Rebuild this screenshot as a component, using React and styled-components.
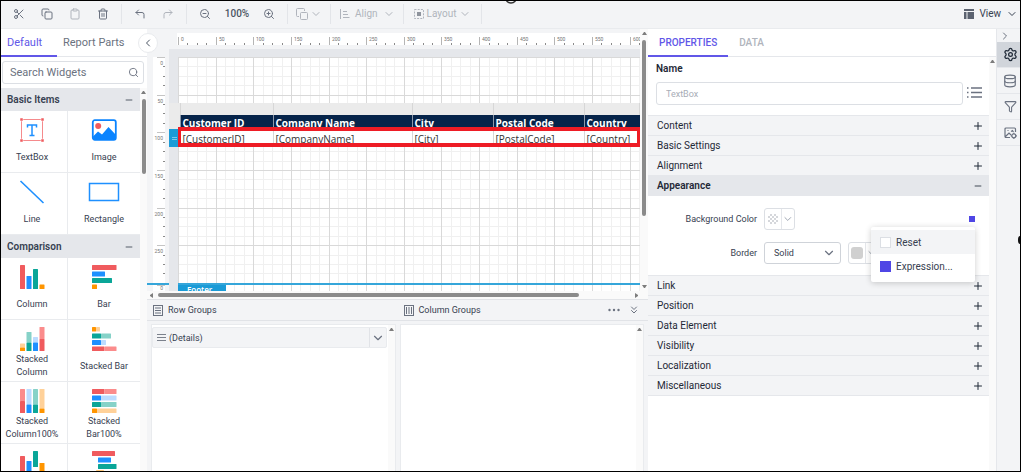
import React from 'react';
import styled, { createGlobalStyle, css } from 'styled-components';
import {
  ChevronDown,
  ChevronLeft,
  ChevronRight,
  ChevronsDown,
  Clipboard,
  Copy,
  CornerUpLeft,
  CornerUpRight,
  Database,
  Filter,
  Minus,
  Plus,
  Scissors,
  Search,
  Settings,
  Trash2,
  ZoomIn,
  ZoomOut,
} from 'lucide-react';

const GlobalStyle = createGlobalStyle`
  * { box-sizing: border-box; }
  body {
    margin: 0;
    font-family: Roboto, 'Liberation Sans', sans-serif;
    font-size: 10px;
    color: #374151;
  }
  button, input, select { font: inherit; color: inherit; }
  button { padding: 0; border: 0; background: none; }
`;

// --- Shell ---

const Shell = styled.div`
  position: relative;
  display: flex;
  flex-direction: column;
  height: 100vh;
  border: 1px solid #000;
  background: #f3f4f6;
  overflow: hidden;
`;

const Workspace = styled.div`
  flex: 1;
  min-height: 0;
  display: grid;
  grid-template-columns: 146px minmax(0, 1fr) 349px 23px;
`;

const TopMark = styled.svg`
  position: absolute;
  top: 0;
  left: 50%;
  margin-left: -5px;
`;

const EdgeMark = styled.svg`
  position: absolute;
  top: 50%;
  right: 0;
`;

// --- Toolbar ---

const Toolbar = styled.header`
  flex: none;
  display: flex;
  align-items: center;
  height: 28px;
  padding-bottom: 2px;
  border-bottom: 1px solid #e9ebee;
  color: #6b7280;
`;

const ToolGroup = styled.div`
  display: flex;
  align-items: center;
  height: 20px;
  padding: 0 ${(p) => (p.$last ? 2 : 4)}px;
  border-right: ${(p) => (p.$last ? 'none' : '1px solid #e3e5e9')};
  margin-left: ${(p) => (p.$last ? 'auto' : '0')};
`;

const ToolButton = styled.button`
  display: flex;
  align-items: center;
  justify-content: center;
  gap: ${(p) => p.$gap || 4}px;
  min-width: 28px;
  height: 20px;
  padding: 0 ${(p) => p.$pad || 0}px;
  font-size: 10px;
  color: ${(p) => (p.$muted ? '#b0b4bc' : p.$strong ? '#374151' : '#6b7280')};
`;

const ZoomLevel = styled.span`
  width: 36px;
  text-align: center;
  font-weight: 500;
  color: #4b5563;
`;

// --- Widget palette ---

const Palette = styled.aside`
  position: relative;
  display: flex;
  flex-direction: column;
  min-height: 0;
  background: #fff;
`;

const Tabs = styled.div`
  flex: none;
  display: flex;
  height: 28px;
  border-bottom: 1px solid #e5e7eb;
`;

const Tab = styled.button`
  height: 28px;
  min-width: 56px;
  padding: 0 ${(p) => (p.$narrow ? 6 : 11)}px;
  font-size: ${(p) => (p.$narrow ? 11 : 10)}px;
  font-weight: ${(p) => (p.$narrow ? 400 : 500)};
  text-align: left;
  white-space: nowrap;
  color: ${(p) => (p.$active ? '#6157e8' : p.$muted ? '#b0b4bc' : '#6b7280')};
  border-bottom: 2px solid ${(p) => (p.$active ? '#6157e8' : 'transparent')};
`;

const CollapseButton = styled.button`
  position: absolute;
  top: 4px;
  right: -11px;
  z-index: 2;
  display: flex;
  align-items: center;
  justify-content: center;
  width: 20px;
  height: 20px;
  border-radius: 50%;
  background: #fff;
  border: 1px solid #e9ebee;
  color: #4b5563;
`;

const SearchBox = styled.label`
  flex: none;
  display: flex;
  align-items: center;
  height: 23px;
  margin: 4px 3px 4px 1px;
  padding: 0 4px 0 7px;
  border: 1px solid #dcdfe4;
  border-radius: 3px;
  color: #6b7280;
`;

const SearchInput = styled.input`
  flex: 1;
  min-width: 0;
  padding: 0;
  border: 0;
  outline: 0;
  font-size: 11px;
  &::placeholder { color: #6b7280; opacity: 1; }
`;

const PaletteBody = styled.div`
  flex: 1;
  min-height: 0;
  display: flex;
`;

const PaletteList = styled.div`
  flex: 1;
  min-width: 0;
  overflow: hidden;
`;

const GroupHeader = styled.button`
  display: flex;
  align-items: center;
  justify-content: space-between;
  width: 100%;
  height: 23px;
  padding: 0 6px;
  background: #e5e7eb;
  font-weight: 600;
  color: #374151;
`;

const WidgetGrid = styled.div`
  display: grid;
  grid-template-columns: 67fr 72fr;
`;

const Widget = styled.button`
  display: flex;
  flex-direction: column;
  align-items: center;
  height: 62px;
  padding: 7px 4px 0 0;
  border-bottom: 1px solid #e9ebee;
  border-right: 1px solid #e9ebee;
  &:nth-child(2n) {
    padding-right: 0;
    border-right: 0;
  }
`;

const WidgetLabel = styled.span`
  display: flex;
  align-items: center;
  height: 26px;
  margin-top: 2px;
  padding: 0 3px;
  font-size: 9px;
  line-height: 13px;
  text-align: center;
`;

// --- Scroll bars ---

const VerticalBar = styled.div`
  flex: none;
  display: flex;
  flex-direction: column;
  align-items: center;
  gap: 4px;
  width: ${(p) => (p.$wide ? 8 : 7)}px;
  padding: 2px 0;
  background: #fafafa;
`;

const HorizontalBar = styled.div`
  flex: none;
  display: flex;
  align-items: center;
  gap: 4px;
  height: 8px;
  padding: 0 9px 0 2px;
  background: #fafafa;
`;

const Thumb = styled.div`
  border-radius: 3px;
  background: #8b8b8b;
`;

const VThumb = styled(Thumb)`
  width: 4px;
  height: ${(p) => p.$size};
  margin-bottom: auto;
`;

const HThumb = styled(Thumb)`
  height: 4px;
  width: ${(p) => p.$size};
  margin-right: auto;
`;

// --- Designer ---

const Designer = styled.main`
  display: flex;
  flex-direction: column;
  min-width: 0;
  min-height: 0;
`;

const DesignArea = styled.div`
  flex: 0 0 262px;
  display: flex;
  min-height: 0;
`;

const DesignColumn = styled.div`
  flex: 1;
  min-width: 0;
  display: flex;
  flex-direction: column;
`;

const TopRuler = styled.svg`
  display: block;
  flex: none;
  align-self: flex-end;
  width: calc(100% - 30px);
  height: 12px;
  margin: 4px 0;
  background: #fff;
`;

const Stage = styled.div`
  flex: 1;
  min-height: 0;
  display: flex;
`;

const RulerColumn = styled.div`
  flex: none;
  display: flex;
  flex-direction: column;
  width: 22px;
  padding-top: 8px;
`;

const SideRuler = styled.svg`
  display: block;
  width: 12px;
  margin-left: 6px;
  background: #fff;
  ${(p) =>
    p.$short
      ? css`
          height: 6px;
        `
      : css`
          flex: 1;
          min-height: 0;
        `}
`;

const RulerDivider = styled.div`
  height: 2px;
  background: #35a6da;
`;

const Desk = styled.div`
  flex: 1;
  min-width: 0;
  display: flex;
  padding: 8px 0 0 9px;
  background: #e5e7eb;
`;

const Page = styled.div`
  position: relative;
  flex: 1;
  min-width: 0;
  display: flex;
  flex-direction: column;
  padding-top: 46px;
  background: #fff;
`;

const PageGrid = styled.svg`
  position: absolute;
  top: 0;
  left: 0;
  width: 100%;
  height: 100%;
`;

const TablixFrame = styled.div`
  position: relative;
  margin-left: -9px;
`;

const Tablix = styled.table`
  width: 100%;
  table-layout: fixed;
  border-collapse: collapse;
  font-family: 'Open Sans', 'Noto Sans', sans-serif;
  font-size: 10px;
  line-height: 14px;
  color: #333;
  td, th {
    padding: 0 0 0 2px;
    text-align: left;
    vertical-align: top;
    white-space: nowrap;
    overflow: hidden;
  }
`;

const HandleRow = styled.tr`
  height: 12px;
  background: #ebebeb;
  td { border-right: 1px solid #d7d7d7; }
`;

const HeaderRow = styled.tr`
  height: 14px;
  th {
    padding-top: 3px;
    line-height: 11px;
    background: #06244a;
    color: #fff;
    font-weight: 700;
    border-left: 1px solid #8d99aa;
  }
  td { background: #ebebeb; }
`;

const DataRow = styled.tr`
  height: 18px;
  background: #fff;
  td { padding-top: 3px; border-left: 1px solid #d7d7d7; }
  td:first-child {
    padding: 7px 0 0 3px;
    border: 0;
    background: #1a9bd7;
  }
`;

const RowHighlight = styled.div`
  position: absolute;
  right: 0;
  bottom: 0;
  left: 9px;
  height: 20px;
  border: solid #ee1c25;
  border-width: 4px 3px;
`;

const FooterBand = styled.div`
  position: relative;
  height: 8px;
  margin-top: auto;
  border-top: 2px solid #35a6da;
`;

const FooterTag = styled.div`
  width: 48px;
  height: 6px;
  padding-left: 9px;
  overflow: hidden;
  background: #1a9bd7;
  color: #fff;
  font-family: 'Open Sans', 'Noto Sans', sans-serif;
  font-size: 8px;
  font-weight: 600;
  line-height: 10px;
`;

// --- Row and column groups ---

const GroupsBar = styled.div`
  flex: none;
  display: grid;
  grid-template-columns: 1fr 1fr;
  height: 22px;
  border-top: 1px solid #e1e3e7;
  border-bottom: 1px solid #e1e3e7;
`;

const GroupsTitle = styled.div`
  display: flex;
  align-items: center;
  gap: 5px;
  padding: 0 8px 0 6px;
  font-size: 9px;
`;

const GroupsActions = styled.div`
  display: flex;
  align-items: center;
  gap: 8px;
  margin-left: auto;
  color: #6b7280;
  button { display: flex; }
`;

const GroupsBody = styled.div`
  flex: 1;
  min-height: 0;
  display: grid;
  grid-template-columns: 1fr 1fr;
  gap: 4px;
  padding: 3px 4px 0;
`;

const GroupsPane = styled.section`
  display: flex;
  border: 1px solid #e9ebee;
  border-bottom: 0;
  background: #fff;
`;

const PaneContent = styled.div`
  flex: 1;
  min-width: 0;
  padding: 2px 1px 0 0;
`;

const GroupItem = styled.div`
  display: flex;
  align-items: center;
  gap: 3px;
  height: 21px;
  padding-left: 4px;
  border: 1px solid #e9ebee;
  border-radius: 2px;
  background: #f3f4f6;
  font-size: 9px;
`;

const GroupToggle = styled.button`
  display: flex;
  align-items: center;
  justify-content: center;
  width: 17px;
  height: 19px;
  margin-left: auto;
  border-left: 1px solid #e1e3e7;
  color: #6b7280;
`;

// --- Properties ---

const Properties = styled.aside`
  display: flex;
  flex-direction: column;
  min-height: 0;
  background: #fff;
  border-right: 1px solid #e5e7eb;
`;

const PropertiesBody = styled.div`
  flex: 1;
  min-height: 0;
  display: flex;
`;

const PropertyList = styled.div`
  flex: 1;
  min-width: 0;
`;

const NameField = styled.div`
  padding: 5px 7px 10px 8px;
`;

const NameLabel = styled.label`
  display: block;
  margin-bottom: 6px;
  line-height: 14px;
  font-weight: 600;
  color: #1f2937;
`;

const NameRow = styled.div`
  display: flex;
  align-items: center;
  gap: 4px;
`;

const NameInput = styled.input`
  flex: 1;
  min-width: 0;
  height: 23px;
  padding: 0 9px;
  border: 1px solid #dcdfe4;
  border-radius: 3px;
  font-size: 9px;
  &::placeholder { color: #a8adb6; opacity: 1; }
`;

const SectionGroup = styled.div`
  border-top: 1px solid #e5e7eb;
`;

const SectionHeader = styled.button`
  display: flex;
  align-items: center;
  justify-content: space-between;
  width: 100%;
  height: 20px;
  padding: 0 ${(p) => (p.$open ? 6 : 5)}px 0 9px;
  border-bottom: 1px solid #e5e7eb;
  background: ${(p) => (p.$open ? '#e5e7eb' : '#f3f4f6')};
  font-weight: ${(p) => (p.$open ? 600 : 400)};
  color: #1f2937;
`;

const SectionBody = styled.div`
  position: relative;
  display: flex;
  flex-direction: column;
  gap: 12px;
  padding: 12px 14px 11px 0;
`;

const PropertyRow = styled.div`
  display: flex;
  align-items: center;
  gap: 7px;
  height: 22px;
`;

const PropertyLabel = styled.label`
  width: 109px;
  text-align: right;
  font-size: 9px;
`;

const ColorButton = styled.button`
  display: flex;
  align-items: center;
  width: 31px;
  height: 22px;
  border: 1px solid #dcdfe4;
  border-radius: 3px;
  color: #9ca3af;
`;

const ColorSwatch = styled.span`
  display: flex;
  align-items: center;
  justify-content: center;
  width: 18px;
  height: 20px;
  border-right: 1px solid #e5e7eb;
`;

const SwatchFill = styled.span`
  width: 12px;
  height: 12px;
  border-radius: 3px;
  background: #d0d0d0;
`;

const SelectWrap = styled.span`
  display: grid;
  align-items: center;
  width: 77px;
  color: #6b7280;
  select, svg { grid-area: 1 / 1; }
  svg { justify-self: end; margin-right: 5px; pointer-events: none; }
`;

const StyleSelect = styled.select`
  appearance: none;
  width: 100%;
  height: 22px;
  padding: 0 9px;
  border: 1px solid #cfd3d9;
  border-radius: 3px;
  background: #fff;
  font-size: 9px;
  color: #374151;
`;

const ExpressionMark = styled.button`
  width: 6px;
  height: 6px;
  margin-left: auto;
  background: #4f46e5;
`;

const Menu = styled.div`
  position: absolute;
  top: 31px;
  right: 14px;
  z-index: 3;
  width: 104px;
  padding: 3px 0 4px;
  border-radius: 2px;
  background: #fff;
  box-shadow: 0 1px 6px rgba(0, 0, 0, 0.2);
`;

const MenuItem = styled.button`
  display: flex;
  align-items: center;
  gap: 5px;
  width: 100%;
  height: 24px;
  padding-left: 9px;
  background: ${(p) => (p.$active ? '#f3f4f6' : '#fff')};
`;

const MenuBox = styled.span`
  width: 11px;
  height: 11px;
  border: 1px solid ${(p) => (p.$filled ? '#4f46e5' : '#dcdfe4')};
  background: ${(p) => (p.$filled ? '#4f46e5' : '#fff')};
`;

const Rail = styled.nav`
  display: flex;
  flex-direction: column;
  color: #6b7280;
`;

const RailButton = styled.button`
  display: flex;
  align-items: center;
  justify-content: center;
  width: 100%;
  height: ${(p) => (p.$small ? 13 : 26)}px;
  padding: ${(p) => (p.$small ? '0 7px 0 0' : '0 0 0 3px')};
  border-bottom: ${(p) => (p.$small ? 'none' : '1px solid #e5e7eb')};
  background: ${(p) => (p.$active ? '#d1d5db' : 'transparent')};
  color: ${(p) => (p.$active ? '#1f2937' : 'inherit')};
`;

// --- Drawings ---

const RED = '#f05b5e';
const BLUE = '#1e90ff';
const GREEN = '#0aa698';
const ORANGE = '#ff9500';
const LIGHT = {
  [RED]: '#fb8c8c',
  [BLUE]: '#bcdcff',
  [GREEN]: '#86d2c8',
  [ORANGE]: '#ffd199',
};

const ArrowIcon = styled.svg`
  display: block;
  flex: none;
`;

const Arrow = ({ dir = 'up' }) => {
  const points = {
    up: '0,4 5,4 3,1 2,1',
    down: '0,1 5,1 3,4 2,4',
    left: '4,0 4,5 1,3 1,2',
    right: '1,0 1,5 4,3 4,2',
  };
  return (
    <ArrowIcon width="5" height="5">
      <polygon points={points[dir]} fill="#7d7d7d" />
    </ArrowIcon>
  );
};

// rects: [x, y, width, height, color]
const Bars = ({ rects }) => (
  <svg width="32" height="24" viewBox="0 0 32 24">
    {rects.map(([x, y, w, h, fill], i) => (
      <rect key={i} x={x} y={y} width={w} height={h} fill={fill} rx="0.5" />
    ))}
  </svg>
);

const icons = {
  textbox: (
    <svg width="32" height="24" viewBox="0 0 32 24">
      <rect x="5.5" y="1.5" width="21" height="21" fill="none" stroke="#f58a8c" />
      {[[5.5, 1.5], [26.5, 1.5], [5.5, 22.5], [26.5, 22.5]].map(([x, y]) => (
        <rect key={`${x}-${y}`} x={x - 1.5} y={y - 1.5} width="3" height="3" fill={RED} stroke="#fff" strokeWidth="0.5" />
      ))}
      <path d="M11.5 9.5V7h9v2.5M16 7v10.5M13.5 17.5h5" fill="none" stroke={BLUE} strokeWidth="1.5" />
    </svg>
  ),
  image: (
    <svg width="32" height="24" viewBox="0 0 32 24">
      <rect x="4.8" y="2.2" width="23" height="19.6" rx="2" fill="#fff" stroke="#0a84ff" strokeWidth="1.8" />
      <circle cx="10.2" cy="8" r="3" fill={RED} />
      <path d="M5 18.5l5-5 4 3 6.5-7.5 7 7.5V21H5z" fill="#0a84ff" />
    </svg>
  ),
  line: (
    <svg width="32" height="24" viewBox="0 0 32 24">
      <path d="M4.5 1l23 22" stroke={BLUE} strokeWidth="1.6" />
    </svg>
  ),
  rectangle: (
    <svg width="32" height="24" viewBox="0 0 32 24">
      <rect x="1.5" y="3.5" width="29" height="17" fill="none" stroke={BLUE} strokeWidth="1.5" />
    </svg>
  ),
  column: <Bars rects={[[4, 0, 5, 24, RED], [10.5, 11, 5, 13, BLUE], [17, 4, 5, 20, GREEN], [23.5, 19.5, 5, 4.5, ORANGE]]} />,
  bar: <Bars rects={[[4, 0, 24.5, 5, RED], [4, 6.5, 13, 5, BLUE], [4, 13, 20, 5, GREEN], [4, 19.5, 5, 4.5, ORANGE]]} />,
  stackedColumn: (
    <Bars
      rects={[
        [4, 16.5, 5, 4, LIGHT[ORANGE]], [4, 20.5, 5, 3.5, ORANGE],
        [10.5, 5, 5, 10.5, LIGHT[GREEN]], [10.5, 15.5, 5, 8.5, GREEN],
        [17, 10, 5, 5.5, LIGHT[BLUE]], [17, 15.5, 5, 8.5, BLUE],
        [23.5, 0, 5, 12, LIGHT[RED]], [23.5, 12, 5, 12, RED],
      ]}
    />
  ),
  stackedBar: (
    <Bars
      rects={[
        [4, 0, 4, 4.5, ORANGE], [8, 0, 4, 4.5, LIGHT[ORANGE]],
        [4, 6.5, 9, 5, GREEN], [13, 6.5, 10, 5, LIGHT[GREEN]],
        [4, 13, 9, 5, BLUE], [13, 13, 5, 5, LIGHT[BLUE]],
        [4, 19.5, 12.5, 4.5, RED], [16.5, 19.5, 12, 4.5, LIGHT[RED]],
      ]}
    />
  ),
  stackedColumn100: (
    <Bars
      rects={[
        [4, 0, 5, 12, LIGHT[RED]], [4, 12, 5, 12, RED],
        [10.5, 0, 5, 15.5, LIGHT[BLUE]], [10.5, 15.5, 5, 8.5, BLUE],
        [17, 0, 5, 15.5, LIGHT[GREEN]], [17, 15.5, 5, 8.5, GREEN],
        [23.5, 0, 5, 19.5, LIGHT[ORANGE]], [23.5, 19.5, 5, 4.5, ORANGE],
      ]}
    />
  ),
  stackedBar100: (
    <Bars
      rects={[
        [4, 0, 12.5, 5, RED], [16.5, 0, 12, 5, LIGHT[RED]],
        [4, 6.5, 9, 5, BLUE], [13, 6.5, 15.5, 5, LIGHT[BLUE]],
        [4, 13, 9, 5, GREEN], [13, 13, 15.5, 5, LIGHT[GREEN]],
        [4, 19.5, 5, 4.5, ORANGE], [9, 19.5, 19.5, 4.5, LIGHT[ORANGE]],
      ]}
    />
  ),
  rangeColumn: <Bars rects={[[4, 5, 5, 19, RED], [10.5, 10, 5, 14, BLUE], [17, 0, 5, 16, GREEN], [23.5, 12, 5, 12, ORANGE]]} />,
  rangeBar: <Bars rects={[[4, 0, 23, 5, RED], [10, 6.5, 13, 5, BLUE], [10, 13, 18.5, 5, GREEN], [8, 19.5, 8, 4.5, ORANGE]]} />,
};

const AlignIcon = () => (
  <svg width="11" height="12" viewBox="0 0 11 12" fill="none" stroke="currentColor">
    <path d="M1.5 1v10M4 3.5h4M4 6.5h5M4 9.5h6.5" />
  </svg>
);

const LayoutIcon = () => (
  <svg width="10" height="10" viewBox="0 0 10 10" fill="none" stroke="currentColor">
    <rect x="0.5" y="0.5" width="9" height="9" strokeDasharray="2 1.2" />
    <rect x="3" y="3" width="4" height="4" fill="#8f949d" stroke="none" />
  </svg>
);

const ArrangeIcon = () => (
  <svg width="12" height="12" viewBox="0 0 12 12" fill="none" stroke="currentColor">
    <path d="M3 8.5H1.5a1 1 0 0 1-1-1v-6a1 1 0 0 1 1-1h6a1 1 0 0 1 1 1V3" />
    <rect x="4.5" y="4.5" width="7" height="7" rx="1" />
  </svg>
);

const ViewIcon = () => (
  <svg width="10" height="10" viewBox="0 0 10 10" fill="#5b6270">
    <path d="M0 0h10v2H0zM0 3h2.5v7H0zM3.5 3H10v7H3.5z" />
  </svg>
);

const ListIcon = () => (
  <svg width="15" height="13" viewBox="0 0 15 13" stroke="#6b7280" strokeWidth="1.3">
    <path d="M0 2h1.5M4 2h11M0 6.5h1.5M4 6.5h11M0 11h1.5M4 11h11" />
  </svg>
);

const RowsIcon = () => (
  <svg width="10" height="11" viewBox="0 0 10 11" fill="none" stroke="#6b7280">
    <rect x="0.5" y="0.5" width="9" height="10" />
    <path d="M2 3h6M2 5.5h6M2 8h6" />
  </svg>
);

const ColumnsIcon = () => (
  <svg width="10" height="11" viewBox="0 0 10 11" fill="none" stroke="#6b7280">
    <rect x="0.5" y="0.5" width="9" height="10" />
    <path d="M2.5 2v7M5 2v7M7.5 2v7" />
  </svg>
);

const DragIcon = () => (
  <svg width="9" height="9" viewBox="0 0 9 9" stroke="#7b818c">
    <path d="M0 1.5h9M0 4.5h9M0 7.5h9" />
  </svg>
);

const DotsIcon = () => (
  <svg width="12" height="4" viewBox="0 0 12 4" fill="#6b7280">
    <circle cx="1.5" cy="2" r="1.2" />
    <circle cx="6" cy="2" r="1.2" />
    <circle cx="10.5" cy="2" r="1.2" />
  </svg>
);

const RowMarkIcon = () => (
  <ArrowIcon width="5" height="5" stroke="#7cc8ec">
    <path d="M0 1.5h5M0 3.5h5" />
  </ArrowIcon>
);

const TransparentIcon = () => (
  <svg width="12" height="12" viewBox="0 0 12 12" fill="#d5d7db">
    {[0, 1, 2, 3, 4].map((row) =>
      [0, 1, 2, 3, 4]
        .filter((col) => (row + col) % 2 === 1)
        .map((col) => <rect key={`${row}-${col}`} x={1 + col * 2} y={1 + row * 2} width="2" height="2" />)
    )}
  </svg>
);

const ImageSettingsIcon = () => (
  <svg width="13" height="12" viewBox="0 0 13 12" fill="none" stroke="currentColor" strokeWidth="1.2">
    <path d="M6 10.5H2a1 1 0 0 1-1-1V2a1 1 0 0 1 1-1h8.5a1 1 0 0 1 1 1v3M1.5 9.5L5 6l2 2M3.5 3.5h1M7 4.5l1.5-1 1 1.5" />
    <circle cx="9.8" cy="8.8" r="2" />
    <path d="M9.8 5.8v1M9.8 10.8v1M6.8 8.8h1M11.8 8.8h1" />
  </svg>
);

// --- Ruler scale ---

const MAJOR = 37.64;
const MINOR = MAJOR / 4;
const range = (count) => Array.from({ length: count }, (_, i) => i);
const minorTicks = range(52).filter((i) => i % 4);
const majorTicks = range(13);

const HorizontalRuler = () => (
  <TopRuler>
    {majorTicks.map((i) => (
      <g key={i}>
        <rect x={Math.round(i * MAJOR) + 1} y="4" width="1" height="8" fill="#b5b5b5" />
        <text x={Math.round(i * MAJOR) + 4} y="8" fontSize="5" fill="#757575">
          {i * 50}
        </text>
      </g>
    ))}
    {minorTicks.map((i) => (
      <rect key={i} x={Math.round(i * MINOR) + 1} y="10" width="1" height="2" fill="#8a8a8a" />
    ))}
  </TopRuler>
);

const VerticalRuler = ({ short, count }) => (
  <SideRuler $short={short}>
    {range(count).map((i) => (
      <g key={i}>
        <rect x="4" y={Math.round(i * MAJOR)} width="8" height="1" fill="#c5c5c5" />
        <text x="10" y={Math.round(i * MAJOR) + (short ? 5 : 8)} fontSize="5" fill="#757575" textAnchor="end">
          {i * 50}
        </text>
      </g>
    ))}
    {!short &&
      minorTicks.map((i) => (
        <rect key={i} x="10" y={Math.round(i * MINOR)} width="2" height="1" fill="#8a8a8a" />
      ))}
  </SideRuler>
);

const GridLines = () => (
  <PageGrid>
    {minorTicks.map((i) => (
      <g key={i} fill="#f0f0f0">
        <rect x={Math.round(i * MINOR)} y="0" width="1" height="100%" />
        <rect x="0" y={Math.round(i * MINOR)} width="100%" height="1" />
      </g>
    ))}
    {majorTicks.map((i) => (
      <g key={i} fill="#d9d9d9">
        <rect x={Math.round(i * MAJOR)} y="0" width="1" height="100%" />
        <rect x="0" y={Math.round(i * MAJOR)} width="100%" height="1" />
      </g>
    ))}
  </PageGrid>
);

// --- Data ---

const palette = [
  {
    title: 'Basic Items',
    widgets: [
      { icon: icons.textbox, label: 'TextBox' },
      { icon: icons.image, label: 'Image' },
      { icon: icons.line, label: 'Line' },
      { icon: icons.rectangle, label: 'Rectangle' },
    ],
  },
  {
    title: 'Comparison',
    widgets: [
      { icon: icons.column, label: 'Column' },
      { icon: icons.bar, label: 'Bar' },
      { icon: icons.stackedColumn, label: 'Stacked Column' },
      { icon: icons.stackedBar, label: 'Stacked Bar' },
      { icon: icons.stackedColumn100, label: 'Stacked Column100%' },
      { icon: icons.stackedBar100, label: 'Stacked Bar100%' },
      { icon: icons.rangeColumn, label: '' },
      { icon: icons.rangeBar, label: '' },
    ],
  },
];

const columns = [
  { title: 'Customer ID', field: '[CustomerID]', width: 93 },
  { title: 'Company Name', field: '[CompanyName]', width: 139 },
  { title: 'City', field: '[City]', width: 81 },
  { title: 'Postal Code', field: '[PostalCode]', width: 91 },
  { title: 'Country', field: '[Country]' },
];

const topSections = ['Content', 'Basic Settings', 'Alignment'];
const bottomSections = ['Link', 'Position', 'Data Element', 'Visibility', 'Localization', 'Miscellaneous'];

// --- Components ---

const MainToolbar = () => (
  <Toolbar>
    <ToolGroup>
      <ToolButton aria-label="Cut"><Scissors size={12} /></ToolButton>
      <ToolButton aria-label="Copy"><Copy size={12} /></ToolButton>
      <ToolButton aria-label="Paste" $muted><Clipboard size={12} /></ToolButton>
      <ToolButton aria-label="Delete"><Trash2 size={12} /></ToolButton>
    </ToolGroup>
    <ToolGroup>
      <ToolButton aria-label="Undo"><CornerUpLeft size={12} /></ToolButton>
      <ToolButton aria-label="Redo" $muted><CornerUpRight size={12} /></ToolButton>
    </ToolGroup>
    <ToolGroup>
      <ToolButton aria-label="Zoom out"><ZoomOut size={12} /></ToolButton>
      <ZoomLevel>100%</ZoomLevel>
      <ToolButton aria-label="Zoom in"><ZoomIn size={12} /></ToolButton>
    </ToolGroup>
    <ToolGroup>
      <ToolButton aria-label="Arrange" $muted $gap={2} $pad={4}>
        <ArrangeIcon />
        <ChevronDown size={12} />
      </ToolButton>
    </ToolGroup>
    <ToolGroup>
      <ToolButton $muted $gap={5} $pad={4}>
        <AlignIcon />
        Align
        <ChevronDown size={12} />
      </ToolButton>
    </ToolGroup>
    <ToolGroup>
      <ToolButton $muted $gap={3} $pad={6}>
        <LayoutIcon />
        Layout
        <ChevronDown size={12} />
      </ToolButton>
    </ToolGroup>
    <ToolGroup $last>
      <ToolButton $strong $gap={5}>
        <ViewIcon />
        View
        <ChevronDown size={12} />
      </ToolButton>
    </ToolGroup>
  </Toolbar>
);

const WidgetPalette = () => (
  <Palette>
    <Tabs>
      <Tab $active $narrow>Default</Tab>
      <Tab $narrow>Report Parts</Tab>
    </Tabs>
    <CollapseButton aria-label="Collapse"><ChevronLeft size={12} /></CollapseButton>
    <SearchBox>
      <SearchInput aria-label="Search Widgets" placeholder="Search Widgets" />
      <Search size={11} />
    </SearchBox>
    <PaletteBody>
      <PaletteList>
        {palette.map((group) => (
          <section key={group.title}>
            <GroupHeader>
              {group.title}
              <Minus size={10} />
            </GroupHeader>
            <WidgetGrid>
              {group.widgets.map((widget, index) => (
                <Widget key={index}>
                  {widget.icon}
                  <WidgetLabel>{widget.label}</WidgetLabel>
                </Widget>
              ))}
            </WidgetGrid>
          </section>
        ))}
      </PaletteList>
      <VerticalBar>
        <Arrow />
        <VThumb $size="75px" />
      </VerticalBar>
    </PaletteBody>
  </Palette>
);

const ReportTable = () => (
  <TablixFrame>
    <Tablix>
      <colgroup>
        <col width="11" />
        {columns.map((column) => (
          <col key={column.title} width={column.width} />
        ))}
      </colgroup>
      <tbody>
        <HandleRow>
          <td />
          {columns.map((column) => <td key={column.title} />)}
        </HandleRow>
        <HeaderRow>
          <td />
          {columns.map((column) => <th key={column.title} scope="col">{column.title}</th>)}
        </HeaderRow>
        <DataRow>
          <td><RowMarkIcon /></td>
          {columns.map((column) => <td key={column.title}>{column.field}</td>)}
        </DataRow>
      </tbody>
    </Tablix>
    <RowHighlight />
  </TablixFrame>
);

const ReportDesigner = () => (
  <Designer>
    <DesignArea>
      <DesignColumn>
        <HorizontalRuler />
        <Stage>
          <RulerColumn>
            <VerticalRuler count={6} />
            <RulerDivider />
            <VerticalRuler short count={1} />
          </RulerColumn>
          <Desk>
            <Page>
              <GridLines />
              <ReportTable />
              <FooterBand>
                <FooterTag>Footer</FooterTag>
              </FooterBand>
            </Page>
          </Desk>
        </Stage>
      </DesignColumn>
      <VerticalBar $wide>
        <Arrow />
        <VThumb $size="176px" />
        <Arrow dir="down" />
      </VerticalBar>
    </DesignArea>
    <HorizontalBar>
      <Arrow dir="left" />
      <HThumb $size="86%" />
      <Arrow dir="right" />
    </HorizontalBar>
    <GroupsBar>
      <GroupsTitle>
        <RowsIcon />
        Row Groups
      </GroupsTitle>
      <GroupsTitle>
        <ColumnsIcon />
        Column Groups
        <GroupsActions>
          <button aria-label="More"><DotsIcon /></button>
          <button aria-label="Collapse groups"><ChevronsDown size={12} /></button>
        </GroupsActions>
      </GroupsTitle>
    </GroupsBar>
    <GroupsBody>
      <GroupsPane>
        <PaneContent>
          <GroupItem>
            <DragIcon />
            (Details)
            <GroupToggle aria-label="Group options"><ChevronDown size={14} /></GroupToggle>
          </GroupItem>
        </PaneContent>
        <VerticalBar><Arrow /></VerticalBar>
      </GroupsPane>
      <GroupsPane>
        <PaneContent />
        <VerticalBar><Arrow /></VerticalBar>
      </GroupsPane>
    </GroupsBody>
  </Designer>
);

const Section = ({ title, open }) => (
  <SectionHeader $open={open} aria-expanded={Boolean(open)}>
    {title}
    {open ? <Minus size={10} /> : <Plus size={12} />}
  </SectionHeader>
);

const PropertiesPanel = () => (
  <Properties>
    <Tabs>
      <Tab $active>PROPERTIES</Tab>
      <Tab $muted>DATA</Tab>
    </Tabs>
    <PropertiesBody>
      <PropertyList>
        <NameField>
          <NameLabel htmlFor="item-name">Name</NameLabel>
          <NameRow>
            <NameInput id="item-name" placeholder="TextBox" />
            <button aria-label="Item list"><ListIcon /></button>
          </NameRow>
        </NameField>
        <SectionGroup>
          {topSections.map((title) => <Section key={title} title={title} />)}
          <Section title="Appearance" open />
        </SectionGroup>
        <SectionBody>
          <PropertyRow>
            <PropertyLabel htmlFor="background-color">Background Color</PropertyLabel>
            <ColorButton id="background-color">
              <ColorSwatch><TransparentIcon /></ColorSwatch>
              <ChevronDown size={12} />
            </ColorButton>
            <ExpressionMark aria-label="Expression options" />
          </PropertyRow>
          <PropertyRow>
            <PropertyLabel htmlFor="border-style">Border</PropertyLabel>
            <SelectWrap>
              <StyleSelect id="border-style" defaultValue="Solid">
                <option>Solid</option>
              </StyleSelect>
              <ChevronDown size={14} />
            </SelectWrap>
            <ColorButton aria-label="Border color">
              <ColorSwatch><SwatchFill /></ColorSwatch>
              <ChevronDown size={12} />
            </ColorButton>
          </PropertyRow>
          <Menu role="menu">
            <MenuItem role="menuitem" $active>
              <MenuBox />
              Reset
            </MenuItem>
            <MenuItem role="menuitem">
              <MenuBox $filled />
              Expression...
            </MenuItem>
          </Menu>
        </SectionBody>
        <SectionGroup>
          {bottomSections.map((title) => <Section key={title} title={title} />)}
        </SectionGroup>
      </PropertyList>
      <VerticalBar><Arrow /></VerticalBar>
    </PropertiesBody>
  </Properties>
);

const SideRail = () => (
  <Rail>
    <RailButton $small aria-label="Collapse panel"><ChevronRight size={12} /></RailButton>
    <RailButton $active aria-label="Properties"><Settings size={15} /></RailButton>
    <RailButton aria-label="Data"><Database size={14} /></RailButton>
    <RailButton aria-label="Parameters"><Filter size={13} /></RailButton>
    <RailButton aria-label="Image manager"><ImageSettingsIcon /></RailButton>
  </Rail>
);

const App = () => (
  <Shell>
    <GlobalStyle />
    <MainToolbar />
    <Workspace>
      <WidgetPalette />
      <ReportDesigner />
      <PropertiesPanel />
      <SideRail />
    </Workspace>
    <TopMark width="10" height="3" fill="none" stroke="#333" strokeWidth="1.5">
      <path d="M0.5 0q4.5 4 9 0" />
    </TopMark>
    <EdgeMark width="2" height="8">
      <ellipse cx="2" cy="4" rx="2" ry="4" fill="#111" />
    </EdgeMark>
  </Shell>
);

export default App;
